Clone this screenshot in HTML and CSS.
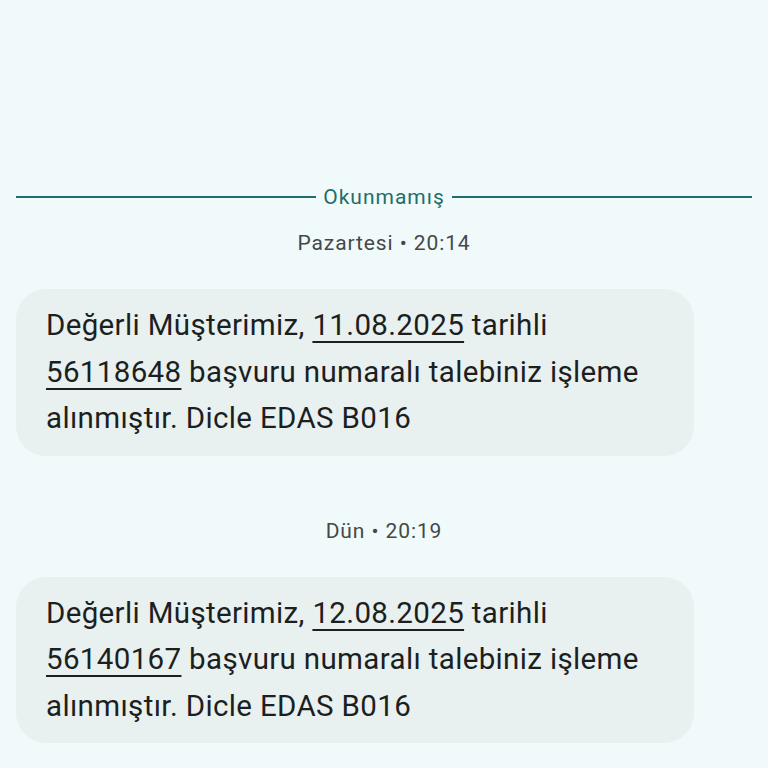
FILE: index.html
```html
<!doctype html>
<html lang="tr">
<head>
	<meta charset="UTF-8">
	<title>Mesajlar</title>
	<link rel="stylesheet" href="styles.css">
</head>
<body>
	<div class="thread">
		<div class="divider">
			<span class="line"></span>
			<span class="label">Okunmamış</span>
			<span class="line"></span>
		</div>
		<div class="day">Pazartesi • 20:14</div>
		<div class="bubble">
			Değerli Müşterimiz, <u>11.08.2025</u> tarihli <u>56118648</u> başvuru numaralı talebiniz işleme alınmıştır. Dicle EDAS B016
		</div>
		<div class="day day-gap">Dün • 20:19</div>
		<div class="bubble">
			Değerli Müşterimiz, <u>12.08.2025</u> tarihli <u>56140167</u> başvuru numaralı talebiniz işleme alınmıştır. Dicle EDAS B016
		</div>
	</div>
</body>
</html>
```

FILE: styles.css
```css
*{padding: 0; margin: 0;}
body{
	background: #f1fafa; color: #1c1f1f;
	font-family: Roboto, "Noto Sans", sans-serif;
	width: 768px; height: 768px; overflow: hidden;
}
.thread{
	padding: 185px 16px 0;
}
.divider{
	display: flex; align-items: center; gap: 7px;
	height: 24px;
}
.divider .line{
	flex: 1; height: 2px; background: #1f6e6a;
}
.divider .label{
	color: #1f6e6a; font-size: 21px; letter-spacing: 1px;
}
.day{
	text-align: center; color: #454848; font-size: 21px;
	line-height: 24px; margin-top: 22px; letter-spacing: 0.9px;
}
.day-gap{
	margin-top: 63px;
}
.bubble{
	width: 678px; box-sizing: border-box;
	background: #e9f0f0; border-radius: 30px;
	padding: 13px 30px 14px; margin-top: 34px;
	font-size: 29.5px; line-height: 46.5px; letter-spacing: 0.35px;
}
.bubble u{
	text-underline-offset: 6px; text-decoration-thickness: 2px;
}
```
